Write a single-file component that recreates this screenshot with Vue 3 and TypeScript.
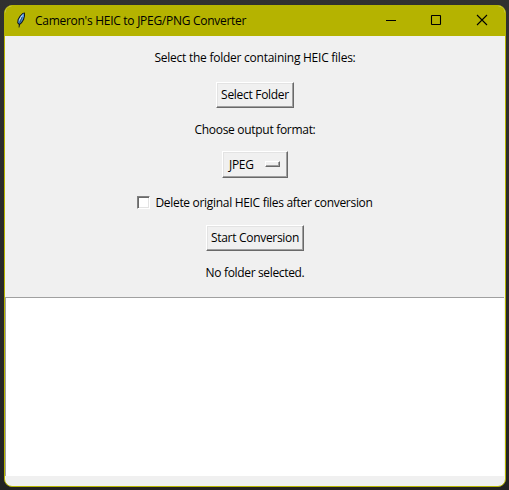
<script setup lang="ts">
import { ref } from 'vue'

const title = "Cameron's HEIC to JPEG/PNG Converter"
const format = ref('JPEG')
const deleteOriginals = ref(false)
const status = ref('No folder selected.')
</script>

<template>
  <div class="desktop">
    <main class="window">
      <header class="titlebar">
        <svg class="feather" width="16" height="16" viewBox="0 0 16 16">
          <path d="M5.6 15.4 L5.8 12.8 L4.2 11 L4.6 7.5 L6.6 4 L9.6 1 L11.9 .6 L12 4 L11 7.8 L9 11 L7 12.8 L6.4 15.4 Z" fill="#10151c" />
          <path d="M5.2 10.8 L5.6 7.8 L7.5 4.4 L10 1.8 L11 1.6 L11 4.3 L9.8 7.8 L8 10.6 L6.6 11.8 Z" fill="#4b92df" />
          <path d="M5.6 9.8 L6.4 7 L8.2 4 L10.2 2.2 L8.2 6.3 Z" fill="#c4e2f7" />
          <path d="M9 5 L6.6 11.5" fill="none" stroke="#17304f" stroke-width=".7" />
        </svg>
        <h1 class="title">{{ title }}</h1>
        <div class="controls">
          <svg width="46" height="31" viewBox="0 0 46 31"><path d="M19 15.5H29" /></svg>
          <svg width="46" height="31" viewBox="0 0 46 31"><rect x="18.5" y="10.5" width="9" height="9" rx=".5" /></svg>
          <svg width="46" height="31" viewBox="0 0 46 31"><path d="M18 10L28 20M28 10L18 20" /></svg>
        </div>
      </header>
      <section class="form">
        <p class="label prompt">Select the folder containing HEIC files:</p>
        <button class="raised select">Select Folder</button>
        <p class="label choose">Choose output format:</p>
        <button class="raised option"><span>{{ format }}</span><i class="indicator"></i></button>
        <label class="check">
          <input v-model="deleteOriginals" type="checkbox" />
          <span>Delete original HEIC files after conversion</span>
        </label>
        <button class="raised start">Start Conversion</button>
        <p class="label status">{{ status }}</p>
      </section>
      <div class="log"></div>
    </main>
  </div>
</template>

<style>
body { margin: 0; }
</style>

<style scoped>
* { box-sizing: border-box; }
.desktop {
  height: 490px;
  padding: 5px 3px 3px 4px;
  background: linear-gradient(#303030, #222);
  font: 12px/16px "Open Sans", "Noto Sans", sans-serif;
  color: #000;
}
.window {
  height: 482px;
  border: 1px solid #b5b300;
  border-radius: 8px;
  background: #f0f0f0;
  overflow: hidden;
}
.titlebar {
  height: 30px;
  display: flex;
  align-items: center;
  background: #b5b300;
}
.feather { margin: -2px 0 0 8px; }
.title {
  margin: 0 0 0 6px;
  font-size: 12px;
  font-weight: 400;
  white-space: nowrap;
  letter-spacing: -.28px;
}
.controls { display: flex; margin: -1px 0 0 auto; }
.controls svg { fill: none; stroke: #000; stroke-width: 1.1; }
.form {
  height: 261px;
  padding-top: 13px;
  display: flex;
  flex-direction: column;
  align-items: center;
  white-space: nowrap;
}
.label { margin: 0; height: 16px; line-height: 18px; }
.prompt { letter-spacing: -.25px; }
.choose { letter-spacing: -.3px; }
.status { letter-spacing: -.34px; }
.raised {
  height: 26px;
  padding: 0;
  border: 1px solid;
  border-color: #fff #696969 #696969 #fff;
  box-shadow: inset -1px -1px #a0a0a0, inset 1px 1px #e3e3e3;
  background: #f0f0f0;
  color: #000;
  font: inherit;
  letter-spacing: -.3px;
  flex: none;
}
.select { width: 78px; margin: 17px 0 13px; }
.option {
  width: 66px;
  height: 27px;
  margin: 14px 0 16px;
  display: flex;
  align-items: center;
  justify-content: space-between;
  padding: 0 7px 0 6px;
}
.indicator {
  width: 15px;
  height: 6px;
  margin-top: -1px;
  border: 1px solid;
  border-color: #fff #696969 #696969 #fff;
  box-shadow: inset -1px -1px #a0a0a0;
}
.check { height: 16px; display: flex; align-items: center; gap: 5px; letter-spacing: -.31px; }
.check span { height: 16px; line-height: 18px; }
.check input {
  appearance: none;
  width: 13px;
  height: 13px;
  margin: 0;
  border: 1px solid;
  border-color: #808080 #fff #fff #808080;
  box-shadow: inset 1px 1px #696969, inset -1px -1px #e3e3e3;
  background: #fff;
}
.start { width: 98px; margin: 15px 0 13px; }
.log {
  height: 179px;
  margin-right: 1px;
  border-top: 1px solid #a0a0a0;
  border-left: 1px solid #a0a0a0;
  background: #fff;
}
</style>
